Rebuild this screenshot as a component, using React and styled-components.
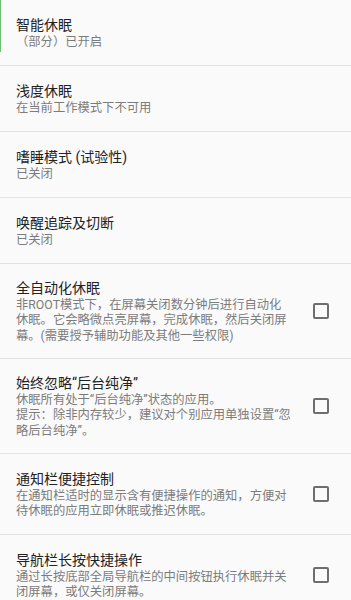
import React from 'react';
import styled, { createGlobalStyle } from 'styled-components';

const GlobalStyle = createGlobalStyle`
  html, body { margin: 0; padding: 0; background: #fafafa; }
  body { font-family: Roboto, "Noto Sans CJK SC", sans-serif; -webkit-font-smoothing: antialiased; }
`;

const items = [
  { title: '智能休眠', desc: '（部分）已开启', marker: true },
  { title: '浅度休眠', desc: '在当前工作模式下不可用' },
  { title: '嗜睡模式 (试验性)', desc: '已关闭' },
  { title: '唤醒追踪及切断', desc: '已关闭' },
  {
    title: '全自动化休眠',
    desc: '非ROOT模式下，在屏幕关闭数分钟后进行自动化\n休眠。它会略微点亮屏幕，完成休眠，然后关闭屏\n幕。(需要授予辅助功能及其他一些权限)',
    check: true,
  },
  {
    title: '始终忽略“后台纯净”',
    desc: '休眠所有处于“后台纯净”状态的应用。\n提示：除非内存较少，建议对个别应用单独设置“忽\n略后台纯净”。',
    check: true,
  },
  {
    title: '通知栏便捷控制',
    desc: '在通知栏适时的显示含有便捷操作的通知，方便对\n待休眠的应用立即休眠或推迟休眠。',
    check: true,
  },
  {
    title: '导航栏长按快捷操作',
    desc: '通过长按底部全局导航栏的中间按钮执行休眠并关\n闭屏幕，或仅关闭屏幕。',
    check: true,
  },
];

const App = () => {
  return (
    <>
      <GlobalStyle />
      <List>
        {items.map((it, i) => (
          <Row key={i} $marker={it.marker} $tall={it.check}>
            <TextCol>
              <Title>{it.title}</Title>
              <Desc>{it.desc}</Desc>
            </TextCol>
            {it.check && (
              <CheckWrap>
                <CheckBox />
              </CheckWrap>
            )}
          </Row>
        ))}
      </List>
    </>
  );
};

const List = styled.div`
  display: flex; flex-direction: column; background: #fafafa; width: 351px;
`;

const Row = styled.div`
  position: relative; display: flex; align-items: center; box-sizing: border-box;
  min-height: ${(p) => (p.$tall ? '81px' : '66px')};
  padding: 14px 0 14px 16px;
  border-bottom: 1px solid #e3e3e3;
  &:last-child { border-bottom: none; }
  ${(p) => p.$marker && `
    &::before { content: ''; position: absolute; left: 0; top: 0; width: 1px; height: 52px; background: #6fbf73; }
  `}
`;

const TextCol = styled.div`
  flex: 1; min-width: 0;
`;

const Title = styled.div`
  font-size: 14px; line-height: 20px; color: #222222; font-weight: 400;
`;

const Desc = styled.div`
  font-size: 12.3px; line-height: 15.33px; color: #7c7c7c; white-space: pre-line;
`;

const CheckWrap = styled.div`
  width: 50px; display: flex; justify-content: center; align-items: center; flex-shrink: 0;
  padding-right: 5px;
`;

const CheckBox = styled.div`
  width: 16px; height: 16px; box-sizing: border-box; border: 2px solid #6e6e6e; border-radius: 2px;
`;

export default App;
